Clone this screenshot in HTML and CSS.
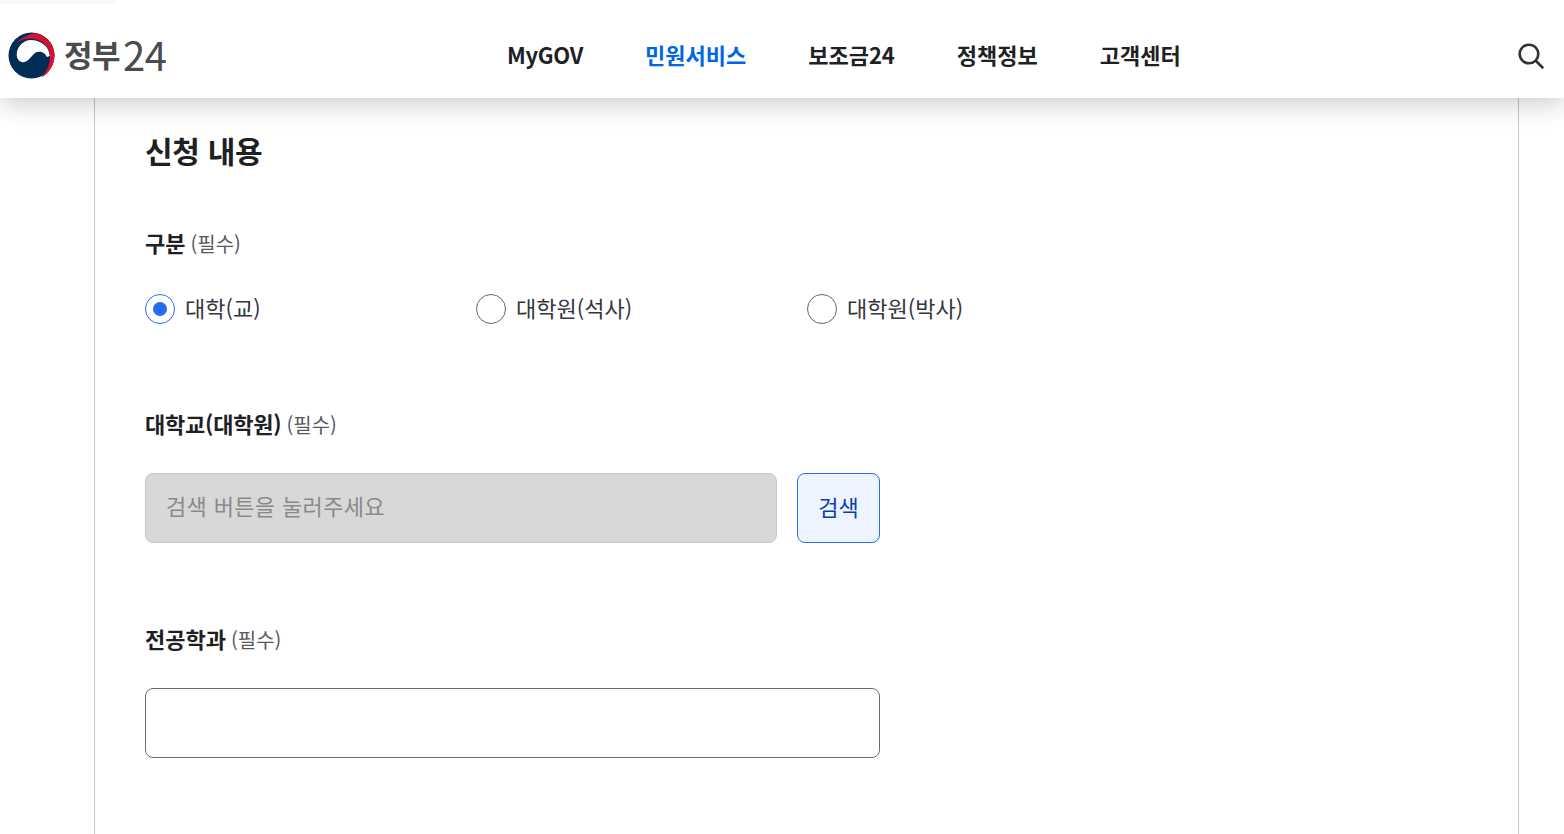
FILE: index.html
```html
<!DOCTYPE html>
<html lang="ko">
<head>
<meta charset="utf-8">
<title>정부24</title>
<link rel="stylesheet" href="styles.css">
</head>
<body>
<div class="topstrip"></div>
<header class="header">
  <a class="logo" href="#">
    <svg class="emblem" width="47" height="47" viewBox="0 0 47 47">
      <circle cx="23.500" cy="23.500" r="23" fill="#002d56"/>
      <path d="M8.700 23C8.700 15 15 8 23 8C31 8 41 13 41.800 24L39 25C37 21 34 19.700 31 19.700C27 19.700 25 23 22 26.300C19 29.500 16 31 13.500 30C10.500 29 8.700 26 8.700 23Z" fill="#fff"/>
      <path d="M8 11.500C12 6.500 19 3 27 1C38 3 46.500 12 46.500 23C46.500 33 41.500 41 33.500 45.500C39 39 42.500 31 42 23C41.500 14 33 7 23 6.500C17 6.500 12 8 8 11.500Z" fill="#d5112f"/>
    </svg>
    <span class="logo-text"><span class="logo-ko">정부</span><span class="logo-num">24</span></span>
  </a>
  <nav class="gnb">
    <a href="#">MyGOV</a>
    <a href="#" class="is-active">민원서비스</a>
    <a href="#">보조금24</a>
    <a href="#">정책정보</a>
    <a href="#">고객센터</a>
  </nav>
  <button class="search-btn" type="button" aria-label="검색">
    <svg width="30" height="30" viewBox="0 0 30 30" fill="none" stroke="#333" stroke-width="2.600" stroke-linecap="round">
      <circle cx="11" cy="14" r="9.300"/>
      <path d="M18 21l6.500 6.500"/>
    </svg>
  </button>
</header>
<main class="page">
  <section class="panel">
    <h2 class="title">신청 내용</h2>

    <div class="field field-type">
      <div class="label"><strong>구분</strong> <span>(필수)</span></div>
      <div class="radios">
        <label class="radio is-checked"><i></i><span>대학(교)</span></label>
        <label class="radio"><i></i><span>대학원(석사)</span></label>
        <label class="radio"><i></i><span>대학원(박사)</span></label>
      </div>
    </div>

    <div class="field field-school">
      <div class="label"><strong>대학교(대학원)</strong> <span>(필수)</span></div>
      <div class="search-row">
        <div class="input input-disabled">검색 버튼을 눌러주세요</div>
        <button class="btn" type="button">검색</button>
      </div>
    </div>

    <div class="field field-major">
      <div class="label"><strong>전공학과</strong> <span>(필수)</span></div>
      <div class="input input-full"></div>
    </div>
  </section>
</main>
</body>
</html>
```
FILE: styles.css
```css
* { box-sizing: border-box; }
html, body { margin: 0; height: 834px; overflow: hidden; background: #fff; }
body {
  position: relative;
  font-family: "Noto Sans CJK KR", "Noto Sans", sans-serif;
  color: #1e2124;
}
a { text-decoration: none; color: inherit; }

.topstrip {
  position: absolute;
  left: 0; top: 0;
  width: 116px; height: 4px;
  background: #f8f8f8;
  border-bottom-right-radius: 4px;
  z-index: 3;
}

.header {
  position: relative;
  z-index: 2;
  height: 98px;
  background: #fff;
  box-shadow: 0 6px 24px rgba(0, 0, 0, .2);
  display: flex;
  align-items: center;
  padding: 12px 16px 0 8px;
}
.logo { display: flex; align-items: center; gap: 9px; width: 475px; }
.emblem { display: block; flex: none; }
.logo-text { display: flex; align-items: center; color: #4c4c4e; line-height: 48px; margin-top: -3px; }
.logo-ko { font-size: 31px; font-weight: 700; letter-spacing: -.5px; }
.logo-num {
  font-size: 40px;
  font-weight: 400;
  letter-spacing: -.5px;
  margin-left: 3px;
}
.gnb { display: flex; gap: 62px; margin-left: 24px; flex: 1; margin-top: -3px; }
.gnb a { font-size: 22px; line-height: 32px; font-weight: 700; color: #1e2124; }
.gnb a:first-child { letter-spacing: -.3px; }
.gnb a.is-active { color: #0067e0; }
.search-btn { border: 0; background: none; padding: 0; display: block; width: 30px; height: 30px; }
.search-btn svg { display: block; }

.page { height: 736px; padding: 0 45px 0 94px; }
.panel {
  height: 100%;
  border-left: 1px solid #c6c6c6;
  border-right: 1px solid #c6c6c6;
  padding: 29px 50px 0;
}
.title { margin: 0; font-size: 30px; line-height: 46px; font-weight: 700; color: #1e2124; letter-spacing: -.3px; }
.label { font-size: 22px; line-height: 30px; display: flex; align-items: baseline; gap: 5px; }
.label strong { font-weight: 700; color: #1e2124; }
.label span { font-size: 20px; color: #55595e; font-weight: 400; }
.field-type { margin-top: 54px; }
.radios { display: flex; margin-top: 35px; }
.radio {
  width: 331px;
  display: flex;
  align-items: center;
  gap: 10px;
  font-size: 22px;
  line-height: 30px;
  color: #33363d;
}
.radio span { margin-top: -4px; }
.radio i {
  width: 30px; height: 30px;
  border-radius: 50%;
  border: 1px solid #666;
  background: #fff;
  flex: none;
  display: flex;
  align-items: center;
  justify-content: center;
}
.radio.is-checked i { border-color: #256ef4; }
.radio.is-checked i::after {
  content: "";
  width: 14px; height: 14px;
  border-radius: 50%;
  background: #256ef4;
}
.field-school { margin-top: 84px; }
.field-school .label strong { letter-spacing: -.2px; }
.search-row { display: flex; gap: 20px; margin-top: 33px; }
.input {
  height: 70px;
  border-radius: 8px;
  border: 1px solid #6d6d6d;
  background: #fff;
}
.input-disabled {
  width: 632px;
  background: #d8d8d8;
  border-color: #c6c6c6;
  padding: 0 0 7px 20px;
  display: flex;
  align-items: center;
  font-size: 22px;
  color: #8a8a8a;
  letter-spacing: .35px;
}
.btn {
  width: 83px;
  height: 70px;
  border: 1px solid #256ef4;
  border-radius: 8px;
  background: #eef4fe;
  color: #0b3fb0;
  font-family: inherit;
  font-size: 22px;
  padding: 0 0 5px;
}
.field-major { margin-top: 80px; }
.input-full { width: 735px; margin-top: 33px; }
```
